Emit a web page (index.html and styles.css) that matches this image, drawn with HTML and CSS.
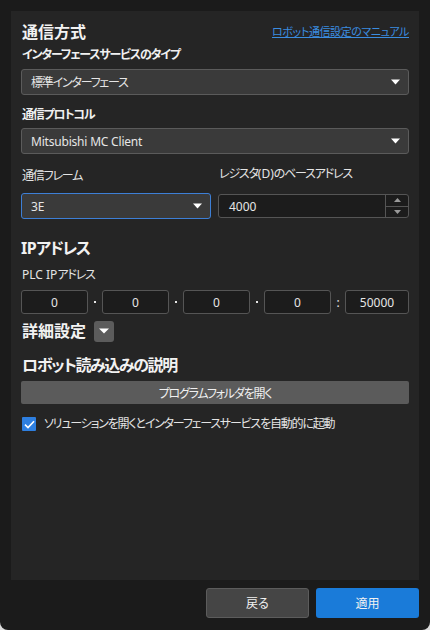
FILE: index.html
```html
<!DOCTYPE html>
<html lang="ja">
<head>
<meta charset="utf-8">
<link rel="stylesheet" href="styles.css">
</head>
<body>
<div class="window">
  <div class="panel">
    <div class="title-row">
      <h2 class="heading">通信方式</h2>
      <a class="link" href="#">ロボット通信設定のマニュアル</a>
    </div>
    <div class="label jp bold l1">インターフェースサービスのタイプ</div>
    <div class="select s1">
      <span class="jp">標準インターフェース</span>
      <svg class="caret" width="9" height="6" viewBox="0 0 9 6"><path d="M0 0.5H9L4.5 5.5Z" fill="#fff"/></svg>
    </div>
    <div class="label jp bold l2">通信プロトコル</div>
    <div class="select s2">
      <span>Mitsubishi MC Client</span>
      <svg class="caret" width="9" height="6" viewBox="0 0 9 6"><path d="M0 0.5H9L4.5 5.5Z" fill="#fff"/></svg>
    </div>
    <div class="two-col">
      <div class="col">
        <div class="label jp frame-label">通信フレーム</div>
        <div class="select active s3">
          <span>3E</span>
          <svg class="caret" width="9" height="6" viewBox="0 0 9 6"><path d="M0 0.5H9L4.5 5.5Z" fill="#fff"/></svg>
        </div>
      </div>
      <div class="col">
        <div class="label jp reg-label">レジスタ<span class="lat">(D)</span>のベースアドレス</div>
        <div class="spin">
          <span class="spin-val">4000</span>
          <div class="spin-btns">
            <div class="spin-btn"><svg width="7" height="4" viewBox="0 0 7 4"><path d="M0 4H7L3.5 0Z" fill="#9a9a9a"/></svg></div>
            <div class="spin-btn"><svg width="7" height="4" viewBox="0 0 7 4"><path d="M0 0H7L3.5 4Z" fill="#9a9a9a"/></svg></div>
          </div>
        </div>
      </div>
    </div>
    <h2 class="heading kana ip-head"><span class="lat tight">IP</span>アドレス</h2>
    <div class="label jp plc-label"><span class="lat">PLC IP</span>アドレス</div>
    <div class="ip-row">
      <div class="ip-box">0</div>
      <div class="sep"><span class="dot"></span></div>
      <div class="ip-box">0</div>
      <div class="sep"><span class="dot"></span></div>
      <div class="ip-box">0</div>
      <div class="sep"><span class="dot"></span></div>
      <div class="ip-box">0</div>
      <div class="sep colon">:</div>
      <div class="ip-box port">50000</div>
    </div>
    <div class="detail-row">
      <h2 class="heading">詳細設定</h2>
      <div class="drop-btn"><svg width="10" height="6" viewBox="0 0 10 6"><path d="M0 0.5H10L5 5.5Z" fill="#fff"/></svg></div>
    </div>
    <h2 class="heading kana robot-head">ロボット読み込みの説明</h2>
    <div class="wide-btn jp">プログラムフォルダを開く</div>
    <div class="check-row">
      <span class="checkbox"><svg width="11" height="9" viewBox="0 0 11 9"><path d="M1 4.6L4 7.5L10 1.2" fill="none" stroke="#fff" stroke-width="1.6"/></svg></span>
      <span class="label jp">ソリューションを開くとインターフェースサービスを自動的に起動</span>
    </div>
  </div>
  <div class="footer">
    <div class="btn back">戻る</div>
    <div class="btn apply">適用</div>
  </div>
</div>
</body>
</html>
```
FILE: styles.css
```css
* { box-sizing: border-box; }
html, body { margin: 0; padding: 0; background: #dcdcdc; }
body {
  font-family: "Noto Sans", "Noto Sans CJK JP", sans-serif;
  font-feature-settings: "palt";
  color: #e8e8e8;
}
.window {
  width: 430px;
  height: 630px;
  background: #1b1b1b;
  border-radius: 0 0 8px 8px;
  padding: 11px 11px 12px;
  display: flex;
  flex-direction: column;
}
.panel {
  flex: 1;
  background: #252525;
  padding: 10px 10px 0;
}
.heading {
  margin: 0;
  font-size: 16px;
  line-height: 22px;
  font-weight: 700;
  color: #f2f2f2;
}
.heading.kana { letter-spacing: -1.4px; }
.title-row {
  display: flex;
  justify-content: space-between;
  align-items: center;
  padding-left: 1px;
}
.link {
  font-size: 11px;
  line-height: 14px;
  color: #3b8de0;
  text-decoration: underline;
  letter-spacing: -0.4px;
}
.label {
  font-size: 12px;
  line-height: 16px;
  color: #e4e4e4;
  padding-left: 1px;
}
.jp { letter-spacing: -1.2px; }
.lat { letter-spacing: 0; }
.lat.tight { letter-spacing: -0.5px; }
.bold { font-weight: 700; color: #f0f0f0; }
.l1 { margin-top: 4px; }
.l2 { margin-top: 12px; }
.select {
  height: 26px;
  background: #3a3a3a;
  border: 1px solid #5b5b5b;
  border-radius: 3px;
  display: flex;
  align-items: center;
  justify-content: space-between;
  padding: 0 8px 0 9px;
  font-size: 12px;
  color: #e6e6e6;
}
.s1 { margin-top: 6px; }
.s2 { margin-top: 5px; }
.s2 span { letter-spacing: -0.2px; }
.select.active { border-color: #3d7fd6; }
.two-col {
  display: grid;
  grid-template-columns: 190px 1fr;
  column-gap: 7px;
}
.frame-label { margin-top: 14px; }
.s3 { margin-top: 9px; }
.reg-label { margin-top: 12px; }
.spin {
  margin-top: 12px;
  height: 24px;
  background: #1c1c1c;
  border: 1px solid #555;
  border-radius: 3px;
  display: flex;
  font-size: 12px;
  color: #e6e6e6;
}
.spin-val {
  flex: 1;
  display: flex;
  align-items: center;
  padding-left: 10px;
}
.spin-btns {
  width: 23px;
  border-left: 1px solid #555;
  display: flex;
  flex-direction: column;
}
.spin-btn {
  flex: 1;
  display: flex;
  align-items: center;
  justify-content: center;
}
.spin-btn + .spin-btn { border-top: 1px solid #555; }
.ip-head { margin-top: 18px; }
.plc-label { margin-top: 8px; }
.ip-row {
  margin-top: 7px;
  display: flex;
  height: 24px;
}
.ip-box {
  width: 67px;
  background: #1c1c1c;
  border: 1px solid #555;
  border-radius: 3px;
  display: flex;
  align-items: center;
  justify-content: center;
  font-size: 12px;
  color: #e6e6e6;
}
.ip-box.port { flex: 1; }
.sep {
  width: 14px;
  display: flex;
  align-items: center;
  justify-content: center;
  font-size: 12px;
  color: #e6e6e6;
}
.dot {
  width: 2px;
  height: 2px;
  background: #e6e6e6;
}
.detail-row {
  margin-top: 6px;
  display: flex;
  align-items: center;
  gap: 8px;
  padding-left: 1px;
}
.drop-btn {
  width: 20px;
  height: 21px;
  background: #5c5c5c;
  border-radius: 3px;
  display: flex;
  align-items: center;
  justify-content: center;
}
.robot-head { margin-top: 12px; padding-left: 1px; }
.wide-btn {
  margin-top: 5px;
  height: 23px;
  background: #5b5b5b;
  border-radius: 2px;
  display: flex;
  align-items: center;
  justify-content: center;
  font-size: 12px;
  color: #f0f0f0;
}
.check-row {
  margin-top: 12px;
  display: flex;
  align-items: center;
  gap: 7px;
  padding-left: 1px;
}
.checkbox {
  width: 14px;
  height: 14px;
  background: #2e7fe0;
  border-radius: 1px;
  display: flex;
  align-items: center;
  justify-content: center;
}
.footer {
  margin-top: 8px;
  display: flex;
  justify-content: flex-end;
  gap: 7px;
}
.btn {
  width: 103px;
  height: 30px;
  border-radius: 3px;
  display: flex;
  align-items: center;
  justify-content: center;
  font-size: 12px;
  color: #f2f2f2;
}
.back {
  background: #454545;
  border: 1px solid #5c5c5c;
}
.apply { background: #1a7bd9; }
```
